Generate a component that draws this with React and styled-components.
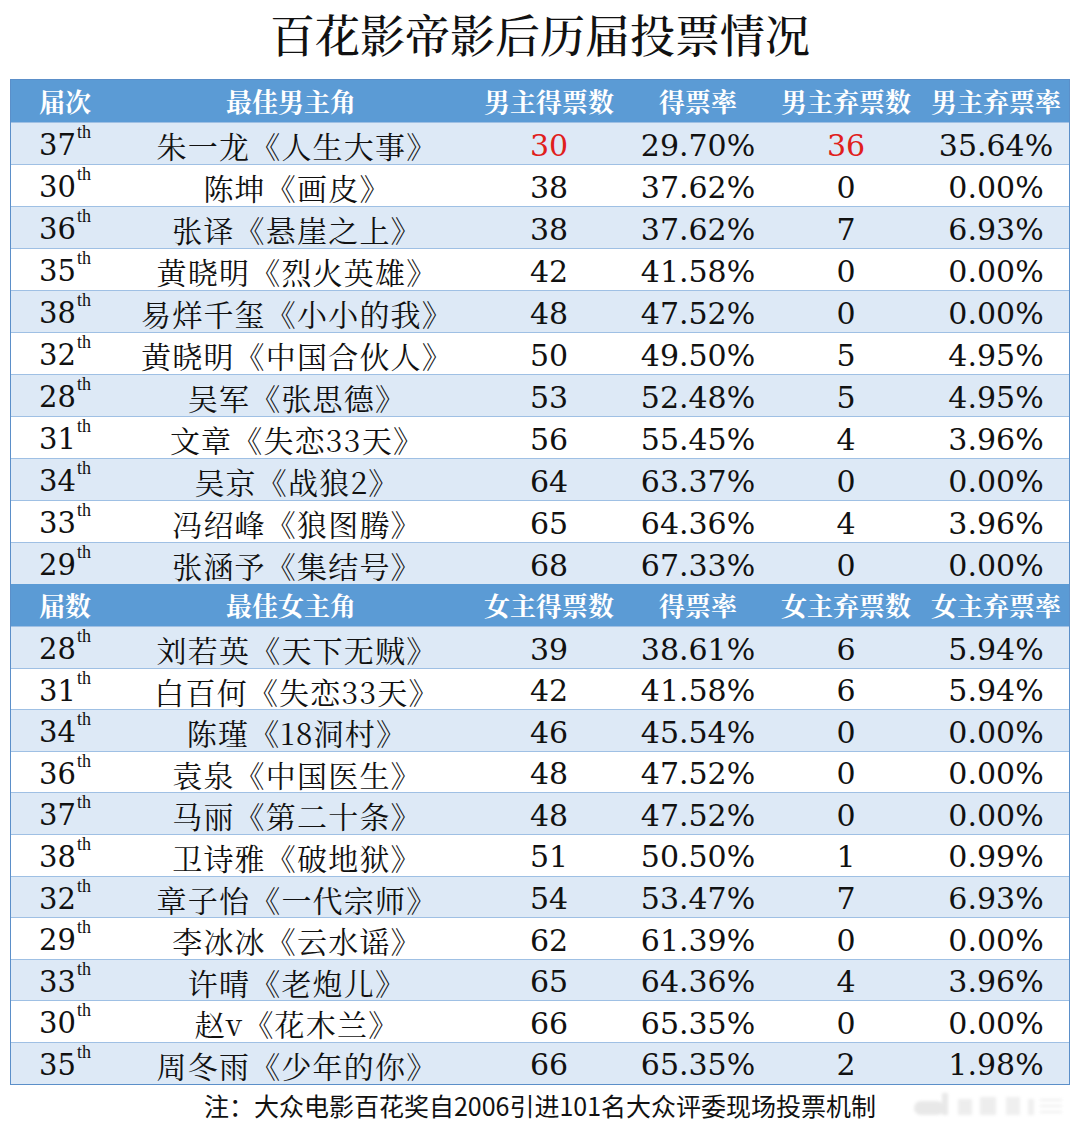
import React from "react";
import styled, { createGlobalStyle } from "styled-components";

const GlobalStyle = createGlobalStyle`
  body {
    margin: 0;
    background: #ffffff;
  }
`;

const CJK = `"Noto Serif CJK SC", "Noto Sans CJK SC", serif`;
const NUM = `"DejaVu Serif", "Liberation Serif", serif`;

const Page = styled.div`
  width: 1080px;
  height: 1129px;
  background: #ffffff;
  display: flex;
  flex-direction: column;
  align-items: center;
`;

const Title = styled.h1`
  margin: 0;
  height: 79px;
  display: flex;
  align-items: center;
  justify-content: center;
  padding-bottom: 12px;
  box-sizing: border-box;
  font-family: ${CJK};
  font-size: 45px;
  font-weight: 500;
  color: #111111;
`;

const Table = styled.div`
  width: 1060px;
  border: 1px solid #5b8fc9;
  box-sizing: border-box;
`;

const Row = styled.div`
  display: grid;
  grid-template-columns: 100px 360px 156px 142px 154px 146px;
  height: ${(p) => p.$h}px;
  background: ${(p) => (p.$head ? "#5b9bd5" : p.$shade ? "#dde9f6" : "#ffffff")};
  border-top: 1px solid ${(p) => (p.$head ? "#5b9bd5" : "#9fc0e4")};
  box-sizing: border-box;
  &:first-child {
    border-top: none;
  }
`;

const Cell = styled.div`
  display: flex;
  align-items: center;
  justify-content: ${(p) => (p.$left ? "flex-start" : "center")};
  padding-left: ${(p) => (p.$left ? "28px" : p.$name ? "12px" : "0")};
  padding-bottom: ${(p) => (p.$head ? "2px" : "6px")};
  white-space: nowrap;
  overflow: visible;
  min-width: 0;
`;

const HeadText = styled.span`
  font-family: ${CJK};
  font-size: 26px;
  font-weight: 700;
  color: #ffffff;
`;

const Name = styled.span`
  font-family: ${CJK};
  font-size: 30px;
  letter-spacing: 1.2px;
  color: #111111;
`;

const Num = styled.span`
  font-family: ${NUM};
  font-size: 30px;
  color: ${(p) => (p.$red ? "#e0201c" : "#111111")};
`;

const Edition = styled.span`
  font-family: ${NUM};
  font-size: 29px;
  color: #111111;
  display: flex;
  align-items: flex-start;
`;

const Sup = styled.span`
  font-family: "Liberation Serif", serif;
  font-size: 18px;
  margin-left: 1px;
  margin-top: -6px;
`;

const FooterRow = styled.div`
  width: 1060px;
  flex: 1;
  display: flex;
  align-items: center;
  justify-content: center;
  position: relative;
`;

const Note = styled.div`
  font-family: "Noto Sans CJK SC", sans-serif;
  font-size: 25px;
  color: #111111;
  margin-bottom: 4px;
`;

const Watermark = styled.div`
  position: absolute;
  right: 6px;
  top: 6px;
  opacity: 0.22;
  filter: blur(1.5px);
`;

const men = [
  ["37", "朱一龙《人生大事》", "30", "29.70%", "36", "35.64%", true],
  ["30", "陈坤《画皮》", "38", "37.62%", "0", "0.00%"],
  ["36", "张译《悬崖之上》", "38", "37.62%", "7", "6.93%"],
  ["35", "黄晓明《烈火英雄》", "42", "41.58%", "0", "0.00%"],
  ["38", "易烊千玺《小小的我》", "48", "47.52%", "0", "0.00%"],
  ["32", "黄晓明《中国合伙人》", "50", "49.50%", "5", "4.95%"],
  ["28", "吴军《张思德》", "53", "52.48%", "5", "4.95%"],
  ["31", "文章《失恋33天》", "56", "55.45%", "4", "3.96%"],
  ["34", "吴京《战狼2》", "64", "63.37%", "0", "0.00%"],
  ["33", "冯绍峰《狼图腾》", "65", "64.36%", "4", "3.96%"],
  ["29", "张涵予《集结号》", "68", "67.33%", "0", "0.00%"],
];

const women = [
  ["28", "刘若英《天下无贼》", "39", "38.61%", "6", "5.94%"],
  ["31", "白百何《失恋33天》", "42", "41.58%", "6", "5.94%"],
  ["34", "陈瑾《18洞村》", "46", "45.54%", "0", "0.00%"],
  ["36", "袁泉《中国医生》", "48", "47.52%", "0", "0.00%"],
  ["37", "马丽《第二十条》", "48", "47.52%", "0", "0.00%"],
  ["38", "卫诗雅《破地狱》", "51", "50.50%", "1", "0.99%"],
  ["32", "章子怡《一代宗师》", "54", "53.47%", "7", "6.93%"],
  ["29", "李冰冰《云水谣》", "62", "61.39%", "0", "0.00%"],
  ["33", "许晴《老炮儿》", "65", "64.36%", "4", "3.96%"],
  ["30", "赵v《花木兰》", "66", "65.35%", "0", "0.00%"],
  ["35", "周冬雨《少年的你》", "66", "65.35%", "2", "1.98%"],
];

const HeaderRow = ({ labels }) => (
  <Row $head $h={42}>
    {labels.map((l, i) => (
      <Cell key={l + i} $head $left={i === 0}>
        <HeadText>{l}</HeadText>
      </Cell>
    ))}
  </Row>
);

const DataRow = ({ r, shade, h }) => (
  <Row $shade={shade} $h={h}>
    <Cell $left>
      <Edition>
        {r[0]}
        <Sup>th</Sup>
      </Edition>
    </Cell>
    <Cell $name>
      <Name>{r[1]}</Name>
    </Cell>
    <Cell>
      <Num $red={r[6]}>{r[2]}</Num>
    </Cell>
    <Cell>
      <Num>{r[3]}</Num>
    </Cell>
    <Cell>
      <Num $red={r[6]}>{r[4]}</Num>
    </Cell>
    <Cell>
      <Num>{r[5]}</Num>
    </Cell>
  </Row>
);

const WeiboMark = () => (
  <svg width="150" height="30" viewBox="0 0 150 30">
    <rect x="0" y="10" width="30" height="14" rx="7" fill="#9a9a9a" />
    <rect x="28" y="2" width="6" height="22" fill="#9a9a9a" />
    <rect x="44" y="8" width="14" height="16" fill="#b0b0b0" />
    <rect x="66" y="6" width="16" height="18" fill="#b0b0b0" />
    <rect x="92" y="6" width="14" height="18" fill="#b8b8b8" />
    <rect x="114" y="8" width="6" height="16" fill="#b8b8b8" />
    <rect x="126" y="8" width="22" height="2" fill="#b8b8b8" />
    <rect x="126" y="14" width="22" height="2" fill="#b8b8b8" />
    <rect x="126" y="20" width="22" height="2" fill="#b8b8b8" />
  </svg>
);

export default function App() {
  return (
    <>
      <GlobalStyle />
      <Page>
        <Title>百花影帝影后历届投票情况</Title>
        <Table>
          <HeaderRow labels={["届次", "最佳男主角", "男主得票数", "得票率", "男主弃票数", "男主弃票率"]} />
          {men.map((r, i) => (
            <DataRow key={"m" + i} r={r} shade={i % 2 === 0} h={42} />
          ))}
          <HeaderRow labels={["届数", "最佳女主角", "女主得票数", "得票率", "女主弃票数", "女主弃票率"]} />
          {women.map((r, i) => (
            <DataRow key={"w" + i} r={r} shade={i % 2 === 0} h={41.6} />
          ))}
        </Table>
        <FooterRow>
          <Note>注：大众电影百花奖自2006引进101名大众评委现场投票机制</Note>
          <Watermark>
            <WeiboMark />
          </Watermark>
        </FooterRow>
      </Page>
    </>
  );
}
